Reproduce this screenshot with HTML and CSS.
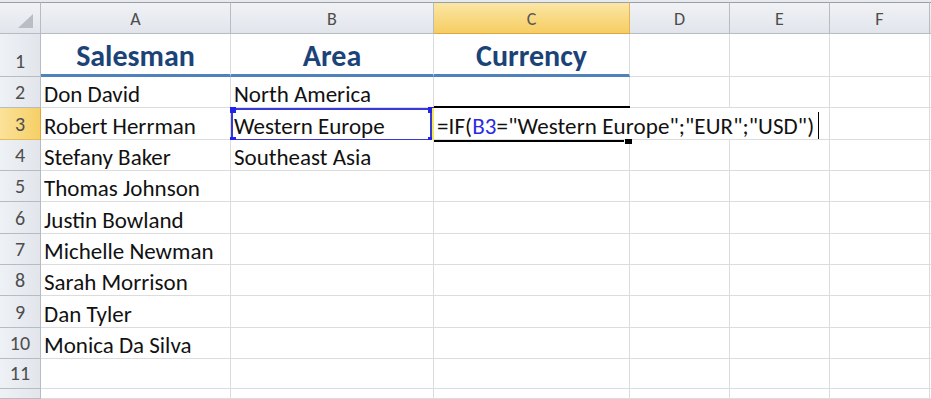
FILE: index.html
```html
<!DOCTYPE html>
<html>
<head>
<meta charset="utf-8">
<link rel="stylesheet" href="styles.css">
</head>
<body>
<div class="sheet">
  <div class="hd corner"><span class="tri"></span></div>
  <div class="hd col">A</div>
  <div class="hd col">B</div>
  <div class="hd col sel">C</div>
  <div class="hd col">D</div>
  <div class="hd col">E</div>
  <div class="hd col">F</div>
  <div class="hd col blank"></div>

  <div class="hd row">1</div>
  <div class="c h1">Salesman</div>
  <div class="c h1">Area</div>
  <div class="c h1">Currency</div>
  <div class="c"></div><div class="c"></div><div class="c"></div><div class="c"></div>

  <div class="hd row">2</div>
  <div class="c">Don David</div>
  <div class="c">North America</div>
  <div class="c"></div><div class="c"></div><div class="c"></div><div class="c"></div><div class="c"></div>

  <div class="hd row sel">3</div>
  <div class="c">Robert Herrman</div>
  <div class="c ref">Western Europe<span class="refbox"><i class="hn tl"></i><i class="hn tr"></i><i class="hn bl"></i><i class="hn br"></i></span></div>
  <div class="c active">
    <span class="mark"></span>
    <div class="editor">=IF(<span class="refc">B3</span>="Western Europe";"EUR";"USD")<span class="caret"></span></div>
    <span class="edge top"></span>
    <span class="edge bottom"></span>
    <span class="fill"></span>
  </div>
  <div class="c"></div><div class="c"></div><div class="c"></div><div class="c"></div>

  <div class="hd row">4</div>
  <div class="c">Stefany Baker</div>
  <div class="c">Southeast Asia</div>
  <div class="c"></div><div class="c"></div><div class="c"></div><div class="c"></div><div class="c"></div>

  <div class="hd row">5</div>
  <div class="c">Thomas Johnson</div>
  <div class="c"></div><div class="c"></div><div class="c"></div><div class="c"></div><div class="c"></div><div class="c"></div>

  <div class="hd row">6</div>
  <div class="c">Justin Bowland</div>
  <div class="c"></div><div class="c"></div><div class="c"></div><div class="c"></div><div class="c"></div><div class="c"></div>

  <div class="hd row">7</div>
  <div class="c">Michelle Newman</div>
  <div class="c"></div><div class="c"></div><div class="c"></div><div class="c"></div><div class="c"></div><div class="c"></div>

  <div class="hd row">8</div>
  <div class="c">Sarah Morrison</div>
  <div class="c"></div><div class="c"></div><div class="c"></div><div class="c"></div><div class="c"></div><div class="c"></div>

  <div class="hd row">9</div>
  <div class="c">Dan Tyler</div>
  <div class="c"></div><div class="c"></div><div class="c"></div><div class="c"></div><div class="c"></div><div class="c"></div>

  <div class="hd row">10</div>
  <div class="c">Monica Da Silva</div>
  <div class="c"></div><div class="c"></div><div class="c"></div><div class="c"></div><div class="c"></div><div class="c"></div>

  <div class="hd row">11</div>
  <div class="c"></div><div class="c"></div><div class="c"></div><div class="c"></div><div class="c"></div><div class="c"></div><div class="c"></div>

  <div class="hd row"></div>
  <div class="c"></div><div class="c"></div><div class="c"></div><div class="c"></div><div class="c"></div><div class="c"></div><div class="c"></div>
</div>
</body>
</html>
```
FILE: styles.css
```css
html, body {
  margin: 0;
  padding: 0;
  background: #fff;
  overflow: hidden;
}
body {
  width: 931px;
  height: 399px;
}
.sheet {
  display: grid;
  grid-template-columns: 41px 190px 203px 196px 100px 100px 100px 1fr;
  grid-template-rows: 32px 43px 31px 32px 31px 31px 32px 31px 31px 32px 31px 30px 1fr;
  height: 399px;
  padding-top: 2px;
  box-sizing: border-box;
  background: #e6eaef;
  font-family: "Carlito", "Lato", sans-serif;
}
.hd {
  box-sizing: border-box;
  background: linear-gradient(#f0f2f5, #e1e5eb);
  color: #4d4d4d;
  display: flex;
  align-items: center;
  justify-content: center;
  border-right: 1px solid #b7bcc3;
  border-bottom: 1px solid #b7bcc3;
}
.hd.col {
  border-top: 1px solid #9a9fa6;
  font-size: 18px;
  padding-top: 2px;
}
.hd.corner {
  border-top: 1px solid #9a9fa6;
  position: relative;
}
.tri {
  position: absolute;
  right: 7px;
  bottom: 5px;
  width: 0;
  height: 0;
  border-left: 15px solid transparent;
  border-bottom: 14px solid #b9bec5;
}
.hd.col.sel {
  background: linear-gradient(#fbe6a5, #f6cd62);
  border-bottom: 1px solid #e0a73c;
  border-right: 1px solid #e4b355;
  color: #555;
}
.hd.row {
  font-size: 20px;
  align-items: flex-end;
  padding-bottom: 3px;
  background: linear-gradient(90deg, #eef1f5, #e2e6ec);
}
.hd.row.sel {
  background: linear-gradient(90deg, #fbe29a, #f6cf66);
  border-bottom: 1px solid #e6b95b;
  border-right: 1px solid #e0a73c;
}
.c {
  box-sizing: border-box;
  background: #fff;
  border-right: 1px solid #dadcdd;
  border-bottom: 1px solid #dadcdd;
  font-size: 23px;
  color: #111;
  white-space: nowrap;
  display: flex;
  align-items: flex-end;
  padding: 0 3px 0 3px;
  line-height: 26px;
  position: relative;
}
.c.h1 {
  justify-content: center;
  font-weight: bold;
  font-size: 30px;
  color: #1c4378;
  border-bottom: 3px solid #4f81bd;
  padding-bottom: 2px;
  line-height: 32px;
}
.refbox {
  position: absolute;
  left: 0;
  top: 0;
  width: 201px;
  height: 33px;
  box-sizing: border-box;
  border: 2px solid #3838d8;
}
.hn {
  position: absolute;
  width: 6px;
  height: 6px;
  background: #2222ee;
}
.hn.tl { left: -3px; top: -3px; }
.hn.tr { right: -4px; top: -3px; }
.hn.bl { left: -3px; bottom: -4px; }
.hn.br { right: -4px; bottom: -4px; }
.mark {
  position: absolute;
  left: -2px;
  top: 0;
  width: 2px;
  height: 32px;
  background: #f2e65a;
  z-index: 3;
}
.editor {
  position: absolute;
  left: 0;
  top: 0;
  height: 31px;
  width: 388px;
  background: #fff;
  z-index: 2;
  box-sizing: border-box;
  padding: 0 0 0 3px;
  display: flex;
  align-items: flex-end;
  line-height: 26px;
  font-size: 23px;
  letter-spacing: 0.1px;
  color: #111;
}
.refc {
  color: #2a2ae6;
}
.caret {
  display: inline-block;
  width: 1px;
  height: 27px;
  background: #000;
  margin-left: 4px;
  align-self: flex-end;
  margin-bottom: 0;
}
.edge {
  position: absolute;
  left: 0;
  height: 2px;
  background: #000;
  z-index: 3;
}
.edge.top {
  top: -2px;
  width: 196px;
}
.edge.bottom {
  bottom: -3px;
  width: 190px;
}
.fill {
  position: absolute;
  left: 191px;
  bottom: -5px;
  width: 7px;
  height: 5px;
  background: #000;
  z-index: 3;
}
```
